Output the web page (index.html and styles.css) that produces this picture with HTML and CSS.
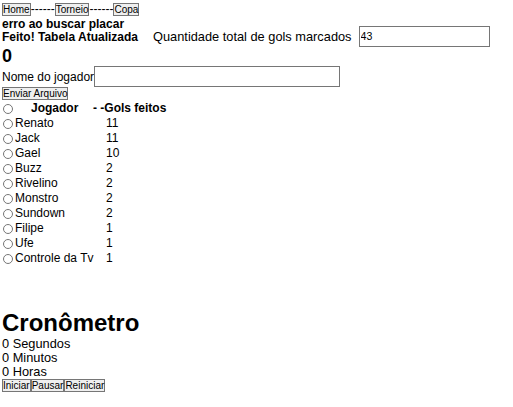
FILE: index.html
```html
<!DOCTYPE html>
<html lang="pt">
<head>
<meta charset="utf-8">
<link rel="stylesheet" href="styles.css">
</head>
<body>
<div class="page">
  <nav class="nav"><button class="btn">Home</button>------<button class="btn">Torneio</button>------<button class="btn">Copa</button></nav>
  <div class="msg err">erro ao buscar placar</div>
  <div class="status-row">
    <span class="msg">Feito! Tabela Atualizada</span>
    <label class="total-label">Quantidade total de gols marcados</label>
    <input class="field total-input" type="text" value="43">
  </div>
  <div class="zero">0</div>
  <div class="name-row">
    <label class="name-label">Nome do jogador</label><input class="field name-input" type="text">
  </div>
  <button class="btn">Enviar Arquivo</button>
  <div class="players">
    <div class="prow head"><span class="c1"><input class="radio" type="radio" name="p"><span class="h-jog">Jogador</span></span><span class="c2 h-gols">- -Gols feitos</span></div>
    <div class="prow"><span class="c1"><input class="radio" type="radio" name="p">Renato</span><span class="c2 val">11</span></div>
    <div class="prow"><span class="c1"><input class="radio" type="radio" name="p">Jack</span><span class="c2 val">11</span></div>
    <div class="prow"><span class="c1"><input class="radio" type="radio" name="p">Gael</span><span class="c2 val">10</span></div>
    <div class="prow"><span class="c1"><input class="radio" type="radio" name="p">Buzz</span><span class="c2 val">2</span></div>
    <div class="prow"><span class="c1"><input class="radio" type="radio" name="p">Rivelino</span><span class="c2 val">2</span></div>
    <div class="prow"><span class="c1"><input class="radio" type="radio" name="p">Monstro</span><span class="c2 val">2</span></div>
    <div class="prow"><span class="c1"><input class="radio" type="radio" name="p">Sundown</span><span class="c2 val">2</span></div>
    <div class="prow"><span class="c1"><input class="radio" type="radio" name="p">Filipe</span><span class="c2 val">1</span></div>
    <div class="prow"><span class="c1"><input class="radio" type="radio" name="p">Ufe</span><span class="c2 val">1</span></div>
    <div class="prow"><span class="c1"><input class="radio" type="radio" name="p">Controle da Tv</span><span class="c2 val">1</span></div>
  </div>
  <h1 class="title">Cronômetro</h1>
  <div class="line">0 Segundos</div>
  <div class="line">0 Minutos</div>
  <div class="line">0 Horas</div>
  <div class="timer-btns"><button class="btn">Iniciar</button><button class="btn">Pausar</button><button class="btn">Reiniciar</button></div>
</div>
</body>
</html>
```
FILE: styles.css
```css
html, body {
  margin: 0;
  padding: 0;
  background: #fff;
}
.page {
  padding: 3px 2px 0 2px;
  font-family: "Liberation Sans", Arial, sans-serif;
  font-size: 12px;
  line-height: 14px;
  color: #000;
}
.btn {
  font-family: "Liberation Sans", Arial, sans-serif;
  font-size: 10px;
  line-height: 11px;
  height: 13px;
  padding: 0;
  margin: 0;
  border: 1px solid #767676;
  border-radius: 0;
  background: #efefef;
  color: #000;
  vertical-align: top;
  display: inline-block;
  box-sizing: border-box;
}
.nav {
  height: 13px;
  line-height: 13px;
  font-size: 12px;
  white-space: nowrap;
}
.msg {
  font-weight: bold;
}
.err {
  line-height: 11px;
  height: 11px;
  margin-top: 3px;
}
.status-row {
  display: flex;
  align-items: center;
  height: 14px;
  white-space: nowrap;
}
.total-label {
  font-size: 12.8px;
  margin-left: 15px;
  margin-right: 7px;
}
.field {
  box-sizing: border-box;
  border: 1px solid #767676;
  padding: 1px 1px;
  font-family: "Liberation Sans", Arial, sans-serif;
  font-size: 10.6px;
  margin: 0;
  background: #fff;
  color: #000;
  border-radius: 0;
}
.total-input {
  width: 131px;
  height: 21px;
  flex: none;
  margin-top: -2px;
}
.zero {
  font-weight: bold;
  font-size: 18px;
  line-height: 18px;
  padding-top: 3px;
}
.name-row {
  display: flex;
  align-items: center;
  height: 22px;
}
.name-label {
  padding-top: 2px;
}
.name-input {
  width: 246px;
  height: 21px;
  flex: none;
}
.prow {
  display: flex;
  height: 15px;
  line-height: 15px;
  white-space: nowrap;
}
.c1 {
  width: 91px;
  display: flex;
  align-items: center;
}
.radio {
  width: 10px;
  height: 10px;
  margin: 0 2px 0 1px;
  flex: none;
}
.h-jog {
  font-weight: bold;
  margin-left: 16px;
}
.h-gols {
  font-weight: bold;
}
.val {
  padding-left: 13px;
}
.title {
  font-size: 24px;
  line-height: 28px;
  margin: 43px 0 0 0;
}
.line {
  font-size: 12.8px;
  line-height: 14px;
}
.timer-btns {
  display: flex;
}
```
